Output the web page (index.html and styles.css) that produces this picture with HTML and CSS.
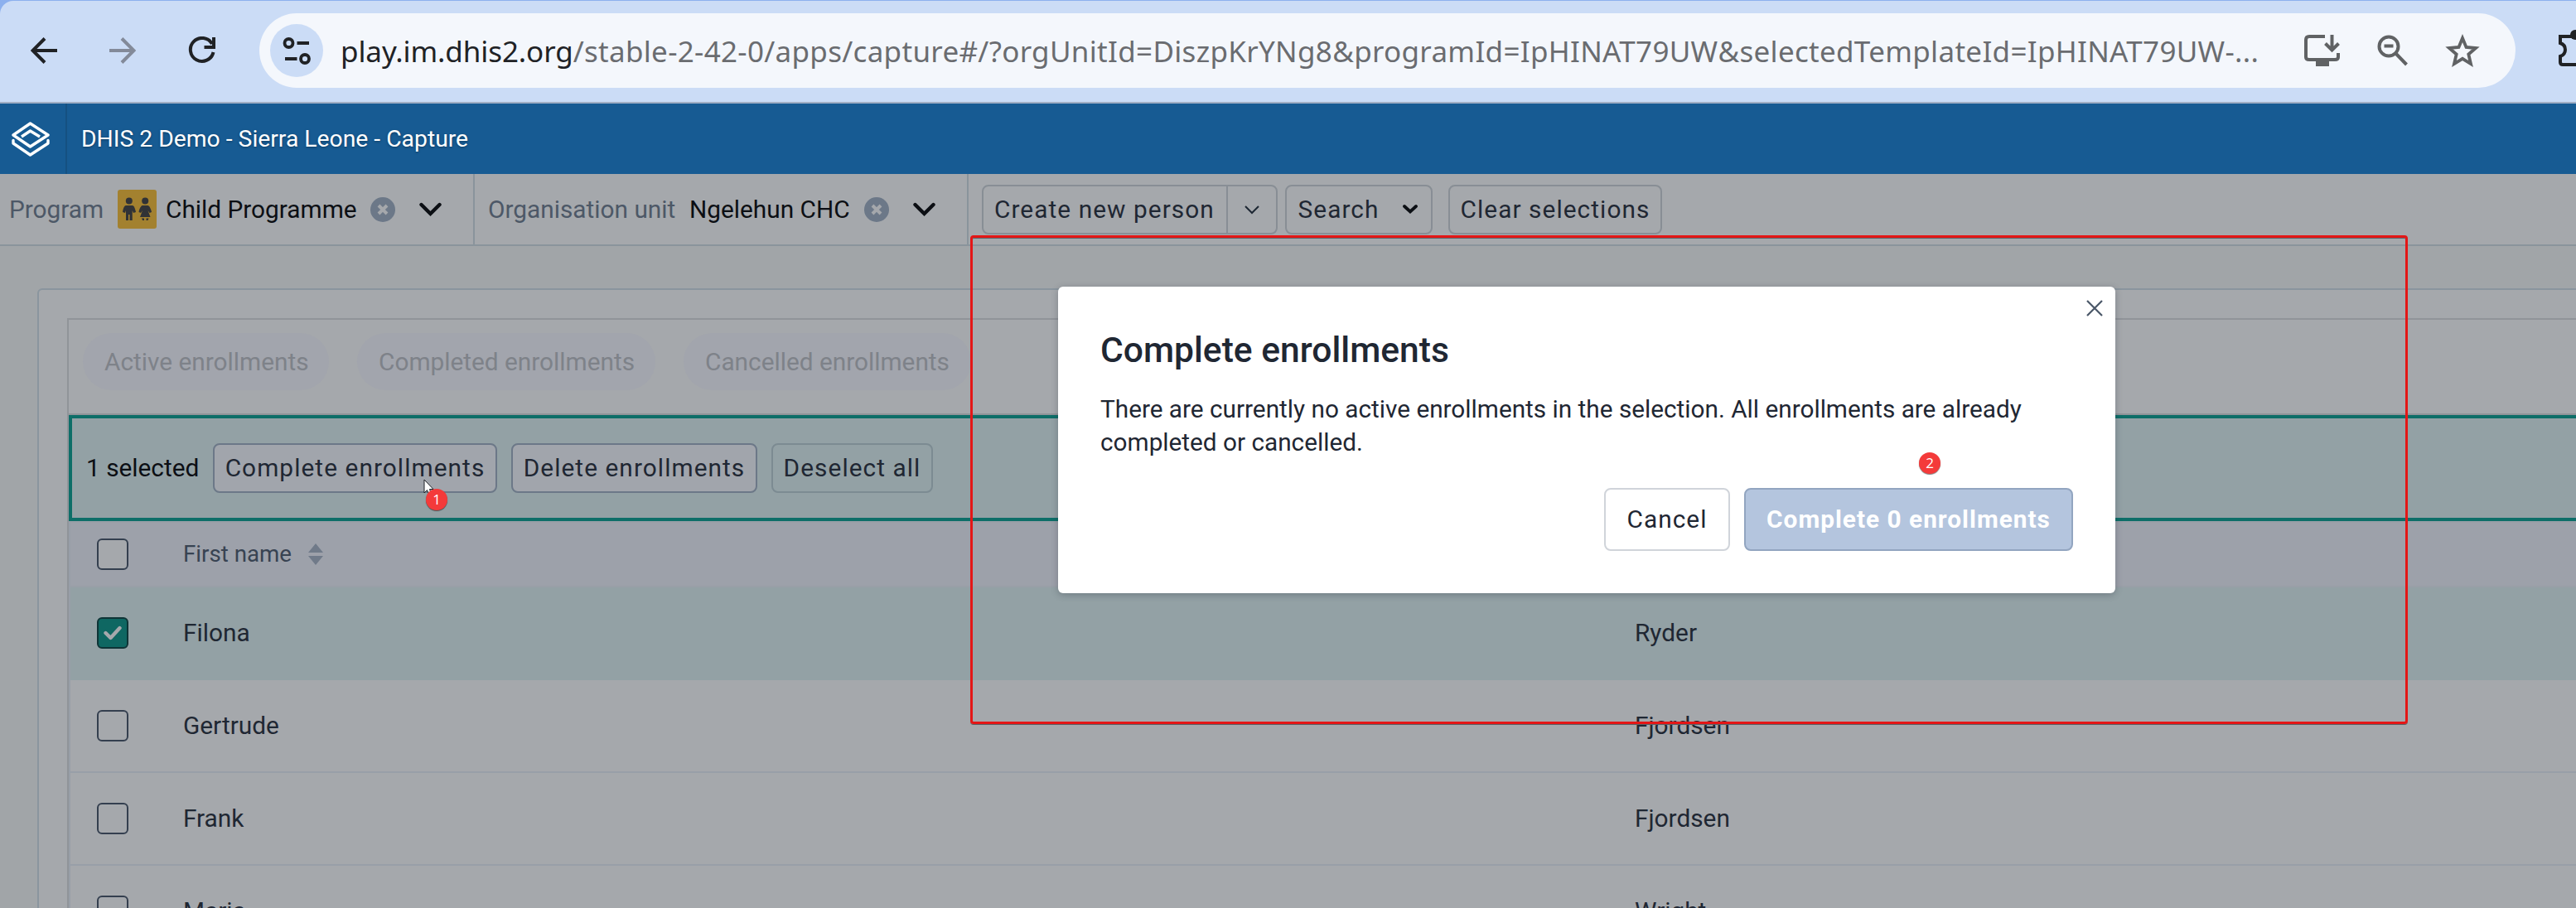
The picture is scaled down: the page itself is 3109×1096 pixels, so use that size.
FILE: index.html
```html
<!DOCTYPE html>
<html lang="en">
<head>
    <meta charset="UTF-8">
    <meta name="viewport" content="width=device-width, initial-scale=1.0">
    <title>DHIS 2 Demo - Sierra Leone - Capture</title>
    <link rel="stylesheet" href="styles.css">
</head>
<body>
    <!-- Browser toolbar -->
    <div class="browser">
        <div class="browser-bar">
            <svg class="nav-icon" width="32" height="32" viewBox="0 0 32 32" fill="none" stroke="#202225" stroke-width="4"><path d="M32 16H3M17 1.500L2.500 16L17 30.500"/></svg>
            <svg class="nav-icon" width="32" height="32" viewBox="0 0 32 32" fill="none" stroke="#838a99" stroke-width="4"><path d="M0 16H29M15 1.500L29.500 16L15 30.500"/></svg>
            <svg class="nav-icon" width="34" height="34" viewBox="0 0 34 34" fill="none" stroke="#202225" stroke-width="4"><path d="M29 9A14 14 0 1 0 30.500 19M31 1V13H19.500"/></svg>
            <div class="omnibox">
                <div class="site-info">
                    <svg width="34" height="34" viewBox="0 0 34 34" fill="none" stroke="#202225" stroke-width="3.800"><circle cx="7.500" cy="8" r="5"/><path d="M17.500 8H32M3 27H17.500"/><circle cx="27" cy="27" r="5"/></svg>
                </div>
                <div class="url"><span class="host">play.im.dhis2.org</span>/stable-2-42-0/apps/capture#/?orgUnitId=DiszpKrYNg8&amp;programId=IpHINAT79UW&amp;selectedTemplateId=IpHINAT79UW-...</div>
                <div class="omnibox-icons">
                    <svg width="44" height="38" viewBox="0 0 44 38"><path d="M25 2H6Q2 2 2 6V27Q2 30 6 30H37Q41 30 41 27V22" fill="none" stroke="#606264" stroke-width="4"/><path d="M14 30H30V38H14Z" fill="#606264"/><path d="M33.500 0V18M25.500 10.500L33.500 18.500L41.500 10.500" fill="none" stroke="#606264" stroke-width="4"/></svg>
                    <svg width="38" height="38" viewBox="0 0 38 38" fill="none" stroke="#606264" stroke-width="4"><circle cx="14" cy="14" r="11.500"/><path d="M8.500 13.500H19.500M22 22L35.500 36"/></svg>
                    <svg width="42" height="40" viewBox="0 0 42 40"><path d="M21 5L25.500 16L37 17L28.300 24.500L31 36L21 29.800L11 36L13.700 24.500L5 17L16.500 16Z" fill="none" stroke="#606264" stroke-width="3.800"/></svg>
                </div>
            </div>
            <svg class="extensions" width="42" height="44" viewBox="0 0 42 44"><path d="M2 8H36V42H5Q2 42 2 39V32Q8 30 8 24Q8 18 2 16Z" fill="none" stroke="#202225" stroke-width="4"/><circle cx="20" cy="6" r="6" fill="#202225"/></svg>
        </div>
    </div>

    <!-- App header -->
    <header class="app-header">
        <div class="logo">
            <svg width="46" height="42" viewBox="0 0 46 42" fill="none" stroke="#fff" stroke-width="3.400" stroke-linejoin="round" stroke-linecap="round"><path d="M22.500 2L44 16L22.500 30L2 16Z"/><path d="M12 18L22.500 11L34 18" stroke-linecap="butt"/><path d="M2 22.500V26L22.500 40L44 26V22.500"/></svg>
        </div>
        <div class="app-title">DHIS 2 Demo - Sierra Leone - Capture</div>
    </header>

    <!-- Context selector -->
    <div class="selector-bar">
        <div class="selector program">
            <span class="label">Program</span>
            <svg class="program-icon" width="47" height="47" viewBox="0 0 47 47" fill="#303236"><rect width="47" height="47" rx="3" fill="#a3812f"/><circle cx="13.800" cy="13.500" r="4"/><path d="M10 19H18Q20 19 21.500 25L22 27L19 28L17.700 25V37H14.500V30H13V37H10V25L9 28L6 27L6.500 24Q8 19 10 19Z"/><circle cx="33.200" cy="13.500" r="4"/><path d="M30 19H36.500Q38.500 19 40.500 25L41 27L38.500 28L36.500 25L39.500 33H27L30 25L28 28L25.500 27L26 24.500Q28 19 30 19ZM29 34.500H32V37H30ZM34.500 34.500H37.500L36.500 37H34.500Z"/></svg>
            <span class="value">Child Programme</span>
            <svg class="clear" width="30" height="30" viewBox="0 0 30 30"><circle cx="15" cy="15" r="15" fill="#6c7888"/><path d="M10 10L20 20M20 10L10 20" stroke="#a5a8ac" stroke-width="4"/></svg>
            <svg class="chevron" width="27" height="18" viewBox="0 0 27 18"><path d="M2.500 3L13.500 14L24.500 3" fill="none" stroke="#0c0f14" stroke-width="4.400" stroke-linecap="round"/></svg>
        </div>
        <div class="selector org-unit">
            <span class="label">Organisation unit</span>
            <span class="value">Ngelehun CHC</span>
            <svg class="clear" width="30" height="30" viewBox="0 0 30 30"><circle cx="15" cy="15" r="15" fill="#6c7888"/><path d="M10 10L20 20M20 10L10 20" stroke="#a5a8ac" stroke-width="4"/></svg>
            <svg class="chevron" width="27" height="18" viewBox="0 0 27 18"><path d="M2.500 3L13.500 14L24.500 3" fill="none" stroke="#0c0f14" stroke-width="4.400" stroke-linecap="round"/></svg>
        </div>
        <div class="selector-actions">
            <div class="btn split-btn">
                <span class="split-main">Create new person</span>
                <span class="split-arrow"><svg width="18" height="12" viewBox="0 0 18 12"><path d="M1 2L9 10L17 2" fill="none" stroke="#1d2733" stroke-width="2"/></svg></span>
            </div>
            <button class="btn btn-search">Search <svg width="18" height="13" viewBox="0 0 18 13"><path d="M2 3L9 9.500L16 3" fill="none" stroke="#0c0f14" stroke-width="3.800" stroke-linecap="round"/></svg></button>
            <button class="btn btn-clear">Clear selections</button>
        </div>
    </div>

    <!-- Working list -->
    <main class="content">
        <div class="card">
            <div class="list">
                <div class="chips">
                    <span class="chip chip-active">Active enrollments</span>
                    <span class="chip chip-completed">Completed enrollments</span>
                    <span class="chip chip-cancelled">Cancelled enrollments</span>
                </div>
                <div class="bulk-bar">
                    <span class="selected-count">1 selected</span>
                    <button class="btn btn-solid btn-complete">Complete enrollments</button>
                    <button class="btn btn-solid btn-delete">Delete enrollments</button>
                    <button class="btn btn-deselect">Deselect all</button>
                </div>
                <div class="table">
                    <div class="row head">
                        <span class="checkbox"></span>
                        <span class="first-name">First name
                            <svg width="18" height="26" viewBox="0 0 18 26" fill="#707a89"><path d="M9 0L18 11H0ZM9 26L0 15H18Z"/></svg>
                        </span>
                    </div>
                    <div class="row selected">
                        <span class="checkbox checked"><svg width="22" height="18" viewBox="0 0 22 18"><path d="M2.500 9L8.500 15L19.500 3" fill="none" stroke="#a5a8ac" stroke-width="4.400" stroke-linecap="round" stroke-linejoin="round"/></svg></span>
                        <span class="first-name">Filona</span>
                        <span class="last-name">Ryder</span>
                    </div>
                    <div class="row">
                        <span class="checkbox"></span>
                        <span class="first-name">Gertrude</span>
                        <span class="last-name">Fjordsen</span>
                    </div>
                    <div class="row">
                        <span class="checkbox"></span>
                        <span class="first-name">Frank</span>
                        <span class="last-name">Fjordsen</span>
                    </div>
                    <div class="row">
                        <span class="checkbox"></span>
                        <span class="first-name">Maria</span>
                        <span class="last-name">Wright</span>
                    </div>
                </div>
            </div>
        </div>
    </main>

    <!-- Dialog -->
    <div class="modal">
        <svg class="modal-close" width="20" height="20" viewBox="0 0 20 20"><path d="M1 1L19 19M19 1L1 19" stroke="#4a5768" stroke-width="2.200"/></svg>
        <h1>Complete enrollments</h1>
        <p>There are currently no active enrollments in the selection. All enrollments are already completed or cancelled.</p>
        <div class="modal-actions">
            <button class="btn btn-cancel">Cancel</button>
            <button class="btn btn-primary">Complete 0 enrollments</button>
        </div>
    </div>

    <!-- Annotations -->
    <div class="highlight"></div>
    <svg class="cursor" width="13" height="20" viewBox="0 0 13 20"><path d="M1 1V17L4.500 13.500L7 19L9.500 18L7.500 12.500H12Z" fill="#fff" stroke="#1d2026" stroke-width="1"/></svg>
    <span class="step step-1">1</span>
    <span class="step step-2">2</span>
</body>
</html>
```
FILE: styles.css
```css
* {
    box-sizing: border-box;
}
body {
    margin: 0;
    width: 3109px;
    height: 1096px;
    position: relative;
    overflow: hidden;
    background: #a1a5a8;
    font-family: Roboto, sans-serif;
    font-size: 29.8px;
    color: #1f2733;
}
svg {
    display: block;
    flex: none;
}

/* Browser toolbar */
.browser {
    height: 125px;
    padding-top: 1px;
    background: #8cb0ee;
    border-bottom: 2px solid #a0aec4;
}
.browser-bar {
    display: flex;
    align-items: center;
    height: 122px;
    padding: 0 0 2px 37px;
    background: #cbdcf6;
    border-top-left-radius: 16px;
    overflow: hidden;
}
.nav-icon {
    margin-right: 63px;
}
.nav-icon + .nav-icon + .nav-icon {
    margin-right: 52px;
}
.omnibox {
    display: flex;
    align-items: center;
    flex: none;
    width: 2723px;
    height: 90px;
    padding-left: 13px;
    border-radius: 45px;
    background: #f4f7fc;
}
.site-info {
    display: flex;
    align-items: center;
    justify-content: center;
    width: 64px;
    height: 64px;
    border-radius: 50%;
    background: #cbdcf6;
}
.url {
    width: 2391px;
    padding-left: 21px;
    font-family: "Noto Sans", sans-serif;
    font-size: 35px;
    letter-spacing: 0.31px;
    white-space: nowrap;
    color: #6a6c70;
}
.host {
    color: #202225;
    letter-spacing: -0.1px;
}
.omnibox-icons {
    display: flex;
    align-items: center;
    gap: 44px;
}
.extensions {
    margin: 0 0 6px 52px;
}

/* App header */
.app-header {
    display: flex;
    align-items: center;
    height: 85px;
    background: #175b93;
    color: #fff;
}
.logo {
    display: flex;
    align-items: center;
    width: 81px;
    height: 85px;
    padding-left: 14px;
    border-right: 2px solid #155181;
}
.app-title {
    padding-left: 17px;
    font-size: 28.3px;
    text-shadow: 0 1px 3px rgba(0,0,0,0.35);
}

/* Context selector */
.selector-bar {
    display: flex;
    height: 87px;
    background: #a5a8ac;
    border-bottom: 2px solid #8a949c;
}
.selector {
    display: flex;
    align-items: center;
    border-right: 2px solid #8a949c;
    white-space: nowrap;
}
.program {
    width: 573px;
    padding-left: 11px;
}
.org-unit {
    width: 596px;
    padding-left: 16px;
}
.label {
    width: 131px;
    color: #4d5867;
}
.org-unit .label {
    width: 243px;
}
.value {
    width: 247px;
    color: #0c0f14;
}
.org-unit .value {
    width: 211px;
}
.program-icon {
    margin-right: 11px;
}
.clear {
    margin-right: 29px;
}
.selector-actions {
    display: flex;
    align-items: center;
    padding-left: 16px;
}

/* Buttons */
.btn {
    display: flex;
    align-items: center;
    justify-content: center;
    height: 60px;
    padding: 0;
    border: 2px solid #888e95;
    border-radius: 8px;
    background: transparent;
    font-family: inherit;
    font-size: 29.8px;
    letter-spacing: 1.07px;
    white-space: nowrap;
    color: #1f2733;
}
.split-btn {
    width: 357px;
    margin-right: 9px;
}
.split-main {
    width: 295px;
    padding-left: 13px;
}
.split-arrow {
    display: flex;
    align-items: center;
    justify-content: center;
    width: 60px;
    height: 100%;
    padding-right: 1px;
    border-left: 2px solid #888e95;
}
.btn-search {
    width: 178px;
    gap: 29px;
    margin-right: 19px;
    padding-right: 2px;
}
.btn-clear {
    width: 258px;
}

/* Working list */
.content {
    height: 799px;
    padding: 51px 0 0 45px;
    overflow: hidden;
}
.card {
    width: 3100px;
    height: 800px;
    padding: 34px 0 0 34px;
    border: 2px solid #8a959e;
    border-radius: 6px;
    background: #a5a8ac;
}
.list {
    width: 3060px;
    border: 2px solid #909499;
}
.chips {
    display: flex;
    height: 115px;
    padding: 16px 0 0 17px;
    border-bottom: 2px solid #909499;
}
.chip {
    display: flex;
    align-items: center;
    height: 69px;
    padding-left: 26px;
    border-radius: 35px;
    background: #a2a5ad;
    white-space: nowrap;
    color: #7e8289;
}
.chip-active {
    width: 297px;
    margin-right: 34px;
}
.chip-completed {
    width: 360px;
    margin-right: 34px;
}
.chip-cancelled {
    width: 347px;
}
.bulk-bar {
    display: flex;
    align-items: center;
    height: 128px;
    padding-left: 17px;
    border: 4px solid #0d6e68;
    background: #93a1a5;
}
.bulk-bar .btn,
.modal .btn {
    padding-bottom: 2px;
}
.selected-count {
    width: 153px;
    padding-bottom: 2px;
    color: #0c0f14;
}
.btn-solid {
    background: #a1a5ac;
    border-color: #6c7888;
}
.btn-complete {
    width: 343px;
    margin-right: 17px;
}
.btn-delete {
    width: 297px;
    margin-right: 17px;
}
.btn-deselect {
    width: 195px;
    border-color: #7c8b92;
}

/* Table */
.table {
    border-left: 2px solid #989fa8;
}
.row {
    display: flex;
    align-items: center;
    height: 112px;
    padding-left: 32px;
    border-bottom: 2px solid #989fa8;
}
.head {
    height: 80px;
    border-top: 2px solid #999fa7;
    border-bottom-color: #999fa7;
    background: #9da1aa;
    font-size: 27.7px;
    color: #384352;
}
.selected {
    background: #93a1a5;
    border-bottom-color: #93a1a5;
}
.checkbox {
    display: flex;
    align-items: center;
    justify-content: center;
    width: 38px;
    height: 38px;
    border: 2px solid #343f4f;
    border-radius: 6px;
    background: #a5a8ac;
}
.checked {
    border-color: #0e3436;
    background: #0f6762;
}
.first-name {
    display: flex;
    align-items: center;
    width: 1752px;
    margin-left: 66px;
    padding-bottom: 1px;
    gap: 20px;
}
.last-name {
    padding-bottom: 1px;
}

/* Dialog */
.modal {
    position: absolute;
    left: 1277px;
    top: 346px;
    width: 1276px;
    height: 370px;
    padding: 51px;
    border-radius: 6px;
    background: #fff;
    box-shadow: 0 2px 8px rgba(33,41,52,0.3);
}
.modal h1 {
    margin: 0;
    font-size: 42.6px;
    line-height: 50px;
    font-weight: 500;
}
.modal p {
    margin: 27px 0 35px;
    font-size: 29.75px;
    line-height: 40px;
}
.modal-close {
    position: absolute;
    right: 15px;
    top: 16px;
}
.modal-actions {
    display: flex;
    justify-content: flex-end;
    gap: 17px;
}
.modal .btn {
    height: 76px;
}
.btn-cancel {
    width: 152px;
    border-color: #d0d4da;
}
.btn-primary {
    width: 397px;
    border-color: #92a5c0;
    background: #b4c5de;
    font-weight: 700;
    letter-spacing: 1px;
    color: #fff;
}

/* Annotations */
.highlight {
    position: absolute;
    left: 1171px;
    top: 284px;
    width: 1735px;
    height: 590px;
    border: 3px solid #e41616;
    border-radius: 4px;
    box-shadow: 0 1px 0 #5a6066, inset 0 1px 0 #5a6066;
}
.cursor {
    position: absolute;
    left: 511px;
    top: 578px;
}
.step {
    position: absolute;
    width: 26px;
    height: 26px;
    border-radius: 50%;
    background: #f43a3a;
    box-shadow: 0 1px 1px rgba(0,0,0,0.5);
    font-family: "Open Sans", sans-serif;
    font-size: 17px;
    line-height: 26px;
    text-align: center;
    color: #fff;
}
.step-1 {
    left: 514px;
    top: 590px;
}
.step-2 {
    left: 2316px;
    top: 546px;
}
```
